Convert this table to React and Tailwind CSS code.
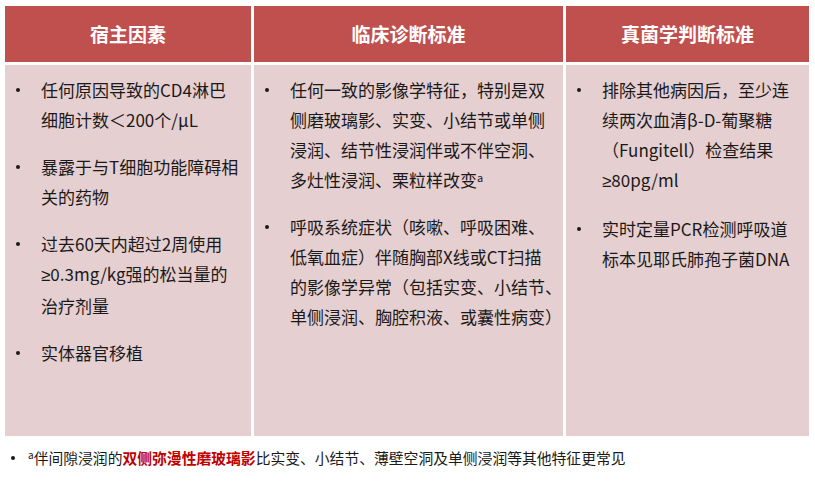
import React from "react";

const G = ({ children }) => <span className="font-['Liberation_Sans',sans-serif]">{children}</span>;

const col1 = [
  ["任何原因导致的CD4淋巴", "细胞计数＜200个/μL"],
  ["暴露于与T细胞功能障碍相", "关的药物"],
  ["过去60天内超过2周使用", <><G>≥</G>0.3mg/kg强的松当量的</>, "治疗剂量"],
  ["实体器官移植"],
];

const col2 = [
  [
    "任何一致的影像学特征，特别是双",
    "侧磨玻璃影、实变、小结节或单侧",
    "浸润、结节性浸润伴或不伴空洞、",
    <>多灶性浸润、栗粒样改变<sup className="text-[11px]">a</sup></>,
  ],
  [
    "呼吸系统症状（咳嗽、呼吸困难、",
    "低氧血症）伴随胸部X线或CT扫描",
    "的影像学异常（包括实变、小结节、",
    "单侧浸润、胸腔积液、或囊性病变）",
  ],
];

const col3 = [
  ["排除其他病因后，至少连", "续两次血清β-D-葡聚糖", "（Fungitell）检查结果", <><G>≥</G>80pg/ml</>],
  ["实时定量PCR检测呼吸道", "标本见耶氏肺孢子菌DNA"],
];

function Header({ children }) {
  return (
    <div className="bg-[#c0504d] flex items-center justify-center text-white font-bold text-[19px] pt-[1px]">
      {children}
    </div>
  );
}

function Cell({ items }) {
  return (
    <div className="bg-[#e6cfd0] pt-[10px] pl-[11px] flex flex-col gap-[17px]">
      {items.map((lines, i) => (
        <div key={i} className="flex">
          <div className="w-[25px] shrink-0 h-[30px] flex items-center">
            <span className="block w-[4px] h-[4px] rounded-full bg-[#1a1a1a]" />
          </div>
          <div className="text-[17px] leading-[30px] text-[#1a1a1a] whitespace-nowrap">
            {lines.map((l, j) => (
              <div key={j}>{l}</div>
            ))}
          </div>
        </div>
      ))}
    </div>
  );
}

export default function App() {
  return (
    <div className="w-[815px] h-[485px] bg-white pt-[6px] pl-[5px] font-['Noto_Sans_CJK_SC','Noto_Sans',sans-serif]">
      <div className="grid grid-cols-[246px_309px_243px] grid-rows-[56px_371px] gap-[3px]">
        <Header>宿主因素</Header>
        <Header>临床诊断标准</Header>
        <Header>真菌学判断标准</Header>
        <Cell items={col1} />
        <Cell items={col2} />
        <Cell items={col3} />
      </div>
      <div className="flex items-center mt-[11px] h-[22px]">
        <div className="w-[23px] shrink-0 flex items-center pl-[6px]">
          <span className="block w-[4px] h-[4px] rounded-full bg-[#1a1a1a]" />
        </div>
        <div className="text-[14.8px] leading-[22px] text-[#1a1a1a] whitespace-nowrap">
          <sup className="text-[10px]">a</sup>伴间隙浸润的
          <span className="text-[#c00000] font-bold">双侧弥漫性磨玻璃影</span>
          比实变、小结节、薄壁空洞及单侧浸润等其他特征更常见
        </div>
      </div>
    </div>
  );
}
